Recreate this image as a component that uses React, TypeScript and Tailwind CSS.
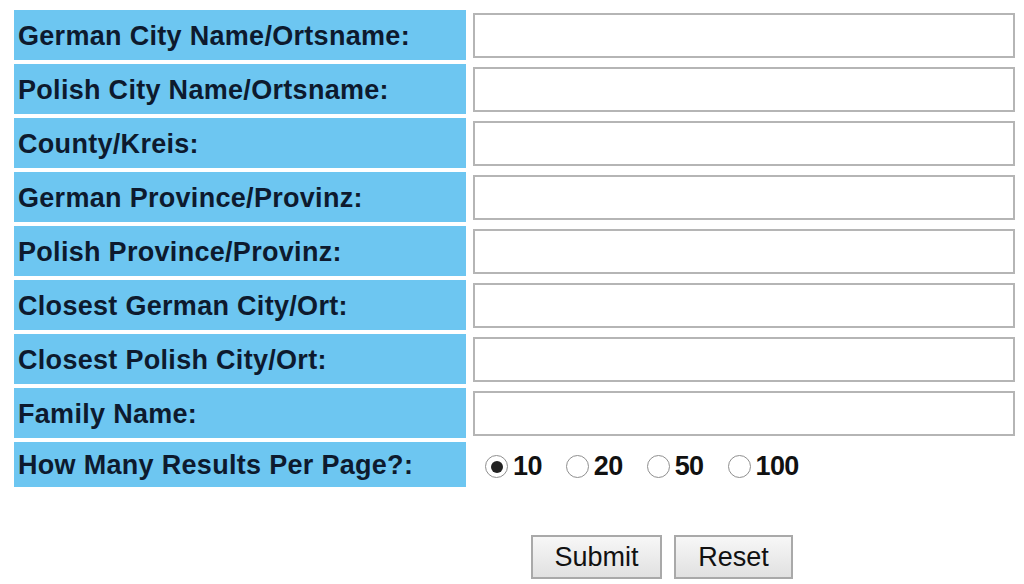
import React from 'react';

const fields = [
  'German City Name/Ortsname:',
  'Polish City Name/Ortsname:',
  'County/Kreis:',
  'German Province/Provinz:',
  'Polish Province/Provinz:',
  'Closest German City/Ort:',
  'Closest Polish City/Ort:',
  'Family Name:',
];

const perPage = ['10', '20', '50', '100'];

export default function App() {
  return (
    <div className="w-[1024px] h-[584px] bg-white overflow-hidden font-['Liberation_Sans',Arial,sans-serif]">
      <form className="pt-[10px] pl-[14px]">
        <div className="flex flex-col gap-[4px]">
          {fields.map((f) => (
            <div key={f} className="flex items-center gap-[7px]">
              <div className="w-[452px] h-[50px] bg-[#6dc6f1] flex items-center pl-[4px] pt-[2px] text-[27px] font-bold text-[#0d1a2e] tracking-[0.3px]">
                {f}
              </div>
              <input
                type="text"
                className="w-[542px] h-[45px] border-2 border-[#b5b5b5] bg-white outline-none"
              />
            </div>
          ))}
          <div className="flex items-center gap-[7px]">
            <div className="w-[452px] h-[45px] bg-[#6dc6f1] flex items-center pl-[4px] pt-[2px] text-[27px] font-bold text-[#0d1a2e] tracking-[0.3px]">
              How Many Results Per Page?:
            </div>
            <div className="flex items-center pl-[12px] pt-[4px]">
              {perPage.map((n, i) => (
                <label key={n} className="flex items-center mr-[24px]">
                  <span className="w-[23px] h-[23px] rounded-full border-[1.5px] border-[#8f8f8f] bg-white flex items-center justify-center">
                    {i === 0 && <span className="w-[12px] h-[12px] rounded-full bg-[#222]" />}
                  </span>
                  <span className="ml-[5px] text-[27px] font-bold text-[#111] tracking-[-0.6px]">{n}</span>
                </label>
              ))}
            </div>
          </div>
        </div>
        <div className="flex gap-[12px] pl-[517px] mt-[48px]">
          <button
            type="button"
            className="w-[131px] h-[44px] border-2 border-[#a9a9a9] bg-gradient-to-b from-[#f7f7f7] to-[#e1e1e1] text-[27px] text-[#111]"
          >
            Submit
          </button>
          <button
            type="button"
            className="w-[119px] h-[44px] border-2 border-[#a9a9a9] bg-gradient-to-b from-[#f7f7f7] to-[#e1e1e1] text-[27px] text-[#111]"
          >
            Reset
          </button>
        </div>
      </form>
    </div>
  );
}
